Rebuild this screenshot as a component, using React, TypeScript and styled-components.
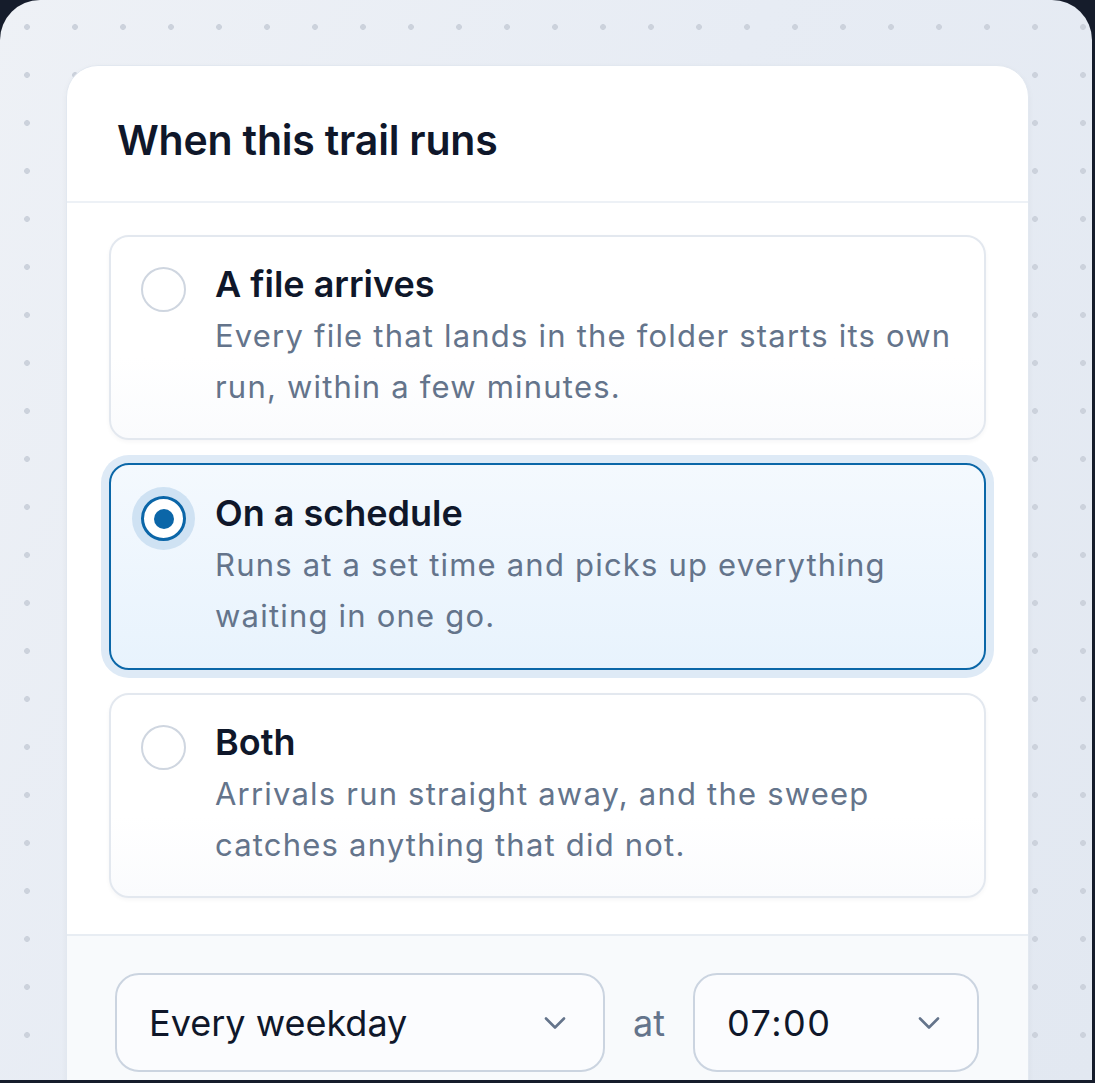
import React, { useState } from 'react';
import styled, { createGlobalStyle } from 'styled-components';

const GlobalStyle = createGlobalStyle`
  html, body {
    margin: 0;
    padding: 0;
    background: #151c2b;
  }
  body {
    font-family: Inter, "Noto Sans", sans-serif;
    -webkit-font-smoothing: antialiased;
  }
`;

const Frame = styled.div`
  width: 1092px;
  height: 1080px;
  box-sizing: border-box;
  padding: 65px 63px 0 66px;
  border-radius: 40px 40px 0 0;
  overflow: hidden;
  background-color: #e6ebf3;
  background-image:
    radial-gradient(circle, #ccd2dc 2.6px, transparent 3.2px),
    linear-gradient(120deg, #eef1f6 0%, #e7ecf4 45%, #e2e8f1 100%);
  background-size: 48px 48px, 100% 100%;
  background-position: 3px 3px, 0 0;
`;

const Card = styled.section`
  background: #ffffff;
  border: 1px solid #e2e8f0;
  border-radius: 32px 32px 0 0;
  box-shadow: 0 2px 6px rgba(15, 23, 42, 0.04);
  overflow: hidden;
  min-height: 1100px;
`;

const Header = styled.header`
  height: 137px;
  display: flex;
  align-items: center;
  padding: 12px 50px 0;
  box-sizing: border-box;
  border-bottom: 2px solid #edf1f6;
`;

const Title = styled.h2`
  margin: 0;
  font-size: 41px;
  font-weight: 600;
  color: #0f172a;
  letter-spacing: -0.2px;
`;

const OptionList = styled.div`
  display: flex;
  flex-direction: column;
  gap: 23px;
  padding: 32px 42px 36px;
`;

const Option = styled.label<{ $selected: boolean }>`
  display: flex;
  gap: 29px;
  align-items: flex-start;
  padding: ${(p) => (p.$selected ? '26px 30px 27px' : '25px 30px 26px')};
  border-radius: 20px;
  border: 2px solid ${(p) => (p.$selected ? '#0b67a8' : '#e3e8ef')};
  background: ${(p) =>
    p.$selected
      ? 'linear-gradient(180deg, #f4f9fe 0%, #e8f3fd 100%)'
      : 'linear-gradient(180deg, #ffffff 0%, #ffffff 60%, #fafbfd 100%)'};
  box-shadow: ${(p) =>
    p.$selected
      ? '0 0 0 8px #deeaf6'
      : '0 2px 4px rgba(15, 23, 42, 0.04)'};
  cursor: pointer;
`;

const Radio = styled.span<{ $checked: boolean }>`
  flex: none;
  width: 45px;
  height: 45px;
  margin-top: 5px;
  box-sizing: border-box;
  border-radius: 50%;
  border: ${(p) => (p.$checked ? '3px solid #0b66a8' : '2.5px solid #cfd6e0')};
  background: #ffffff;
  box-shadow: ${(p) => (p.$checked ? '0 0 0 9px #cfe2f3' : 'none')};
  display: flex;
  align-items: center;
  justify-content: center;

  &::after {
    content: '';
    display: ${(p) => (p.$checked ? 'block' : 'none')};
    width: 20px;
    height: 20px;
    border-radius: 50%;
    background: #0b66a8;
  }
`;

const OptionText = styled.div`
  display: flex;
  flex-direction: column;
`;

const OptionTitle = styled.div`
  font-size: 36px;
  line-height: 44px;
  font-weight: 600;
  color: #0f172a;
`;

const OptionDesc = styled.div`
  font-size: 31px;
  line-height: 51px;
  letter-spacing: 1.2px;
  color: #64748b;
  margin-top: 4px;
`;

const Footer = styled.div`
  border-top: 2px solid #e8edf3;
  background: #f8fafc;
  padding: 37px 48px;
  display: flex;
  align-items: center;
  gap: 28px;
`;

const Select = styled.div<{ $width: number }>`
  width: ${(p) => p.$width}px;
  height: 99px;
  flex: none;
  box-sizing: border-box;
  border: 2px solid #cbd4e0;
  border-radius: 24px;
  background: #fbfcfe;
  padding: 0 37px 0 32px;
  display: flex;
  align-items: center;
  justify-content: space-between;
  font-size: 36px;
  color: #0f172a;
`;

const SelectValue = styled.span<{ $spacing?: number }>`
  letter-spacing: ${(p) => p.$spacing ?? 0}px;
`;

const AtLabel = styled.span`
  font-size: 36px;
  color: #64748b;
`;

const Chevron = () => (
  <svg width="22" height="12" viewBox="0 0 22 12" fill="none">
    <path d="M2 1.5l9 9 9-9" stroke="#64748b" strokeWidth="2.6" strokeLinecap="round" strokeLinejoin="round" />
  </svg>
);

const options = [
  {
    id: 'arrive',
    title: 'A file arrives',
    lines: ['Every file that lands in the folder starts its own', 'run, within a few minutes.'],
  },
  {
    id: 'schedule',
    title: 'On a schedule',
    lines: ['Runs at a set time and picks up everything', 'waiting in one go.'],
  },
  {
    id: 'both',
    title: 'Both',
    lines: ['Arrivals run straight away, and the sweep', 'catches anything that did not.'],
  },
];

export default function App() {
  const [selected, setSelected] = useState('schedule');

  return (
    <>
      <GlobalStyle />
      <Frame>
        <Card>
          <Header>
            <Title>When this trail runs</Title>
          </Header>
          <OptionList>
            {options.map((o) => (
              <Option key={o.id} $selected={selected === o.id} onClick={() => setSelected(o.id)}>
                <Radio $checked={selected === o.id} />
                <OptionText>
                  <OptionTitle>{o.title}</OptionTitle>
                  <OptionDesc>
                    {o.lines.map((l) => (
                      <div key={l}>{l}</div>
                    ))}
                  </OptionDesc>
                </OptionText>
              </Option>
            ))}
          </OptionList>
          <Footer>
            <Select $width={490}>
              <SelectValue>Every weekday</SelectValue>
              <Chevron />
            </Select>
            <AtLabel>at</AtLabel>
            <Select $width={286}>
              <SelectValue $spacing={1.5}>07:00</SelectValue>
              <Chevron />
            </Select>
          </Footer>
        </Card>
      </Frame>
    </>
  );
}
